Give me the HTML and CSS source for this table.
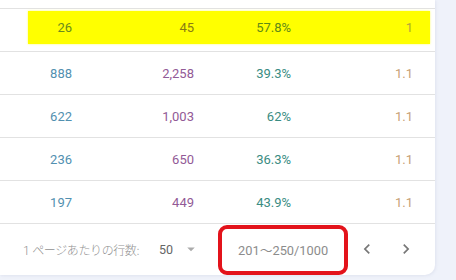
FILE: index.html
```html
<!DOCTYPE html>
<html lang="ja">
<head>
<meta charset="utf-8">
<link rel="stylesheet" href="styles.css">
</head>
<body>
<div class="card">
  <div class="spacer"></div>
  <div class="row">
    <div class="hl">
      <div class="c c1 h1">26</div>
      <div class="c c2 h2">45</div>
      <div class="c c3 h3">57.8%</div>
      <div class="c c4 h4">1</div>
    </div>
  </div>
  <div class="row">
    <div class="cells">
      <div class="c c1">888</div>
      <div class="c c2">2,258</div>
      <div class="c c3">39.3%</div>
      <div class="c c4">1.1</div>
    </div>
  </div>
  <div class="row">
    <div class="cells">
      <div class="c c1">622</div>
      <div class="c c2">1,003</div>
      <div class="c c3">62%</div>
      <div class="c c4">1.1</div>
    </div>
  </div>
  <div class="row">
    <div class="cells">
      <div class="c c1">236</div>
      <div class="c c2">650</div>
      <div class="c c3">36.3%</div>
      <div class="c c4">1.1</div>
    </div>
  </div>
  <div class="row">
    <div class="cells">
      <div class="c c1">197</div>
      <div class="c c2">449</div>
      <div class="c c3">43.9%</div>
      <div class="c c4">1.1</div>
    </div>
  </div>
  <div class="footer">
    <span class="label"><span class="one">1</span>ページあたりの行数:</span>
    <span class="per">50</span>
    <svg class="drop" viewBox="0 0 24 24" width="18" height="18"><path d="M7 10l5 5 5-5z" fill="#ababab"/></svg>
    <span class="range">201～250/1000</span>
    <svg class="nav prev" viewBox="0 0 24 24" width="20" height="20"><path d="M15.41 7.41L14 6l-6 6 6 6 1.41-1.41L10.83 12z" fill="#777"/></svg>
    <svg class="nav next" viewBox="0 0 24 24" width="20" height="20"><path d="M10 6L8.59 7.41 13.17 12l-4.58 4.59L10 18l6-6z" fill="#777"/></svg>
    <div class="mark"></div>
  </div>
</div>
</body>
</html>
```
FILE: styles.css
```css
html, body {
  margin: 0;
  padding: 0;
}
body {
  width: 456px;
  height: 280px;
  overflow: hidden;
  background: #eff2fa;
  font-family: Roboto, "Noto Sans CJK JP", sans-serif;
  font-size: 13px;
}
.card {
  width: 435px;
  height: 275px;
  background: #fff;
  border-bottom-right-radius: 10px;
  box-shadow: 1px 1px 3px rgba(120, 130, 170, 0.12);
}
.spacer {
  height: 8px;
}
.row {
  height: 42px;
  border-top: 1px solid #e2e2e2;
  position: relative;
}
.cells, .hl {
  display: grid;
  grid-template-columns: 72px 122px 97px 122px;
  height: 100%;
  align-items: center;
}
.hl {
  background: #ffff00;
  margin: 2px 5px 0 28px;
  height: 33px;
  grid-template-columns: 44px 122px 97px 122px;
  box-shadow: 0 0 2px #ffff66;
}
.c {
  text-align: right;
  line-height: 16px;
  padding-top: 1px;
}
.c1 { color: #5290b0; }
.c2 { color: #925a96; }
.c3 { color: #3a8c82; }
.c4 { color: #c7a176; }
.h1 { color: #6a8a1e; }
.h2 { color: #8a7a14; }
.h3 { color: #5f8a18; }
.h4 { color: #b1a23c; }
.footer {
  position: relative;
  height: 50px;
  border-top: 1px solid #e2e2e2;
  display: flex;
  align-items: center;
  color: #919191;
  font-size: 12px;
}
.label {
  margin-left: 23px;
  font-family: "Noto Sans CJK JP", sans-serif;
  font-weight: 300;
  letter-spacing: -0.4px;
}
.one {
  font-family: Roboto, sans-serif;
  margin-right: 3px;
}
.per {
  margin-left: 20px;
  color: #666;
  font-size: 12.5px;
}
.drop {
  margin-left: 9px;
}
.range {
  margin-left: 38px;
  color: #8c8c8c;
  font-size: 12.8px;
}
.prev {
  margin-left: 29px;
}
.next {
  margin-left: 19px;
}
.mark {
  position: absolute;
  left: 218px;
  top: 1px;
  width: 122px;
  height: 42px;
  border: 4px solid #e3131b;
  border-radius: 9px;
}
```
